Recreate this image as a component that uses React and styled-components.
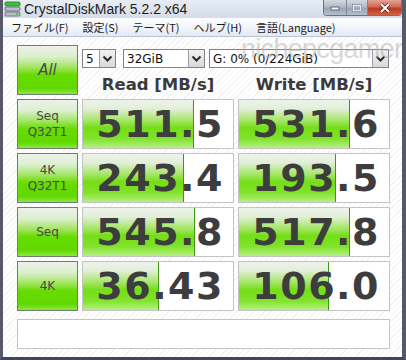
import React from 'react'
import styled, { createGlobalStyle } from 'styled-components'

const GlobalStyle = createGlobalStyle`
  html, body {
    margin: 0;
    padding: 0;
    background: #fff;
  }
  * {
    box-sizing: border-box;
  }
`

const Window = styled.div`
  position: relative;
  width: 406px;
  height: 360px;
  display: flex;
  flex-direction: column;
  background: #d6dfea;
  border-left: 3px solid #58586a;
  border-right: 4px solid #58586a;
  border-bottom: 3px solid #44445a;
  overflow: hidden;
`

const TitleBar = styled.div`
  height: 18px;
  display: flex;
  align-items: flex-start;
  background: linear-gradient(to bottom, #e8edf4, #d3dce8);
`

const TitleText = styled.span`
  margin-left: 2px;
  margin-top: 1px;
  font-family: 'Liberation Sans', Arial, sans-serif;
  font-size: 14px;
  line-height: 16px;
  color: #1e1e1e;
`

const Captions = styled.div`
  margin-left: auto;
  display: flex;
  height: 16px;
  border: 1px solid #6a7384;
  border-top: none;
  border-radius: 0 0 4px 4px;
  overflow: hidden;
`

const CaptionButton = styled.div`
  width: ${(p) => p.$w}px;
  height: 100%;
  display: flex;
  align-items: center;
  justify-content: center;
  background: ${(p) =>
    p.$close
      ? 'linear-gradient(to bottom, #e4a394 0%, #d06a55 45%, #b93a22 55%, #d0613f 100%)'
      : 'linear-gradient(to bottom, #d3d9e2 0%, #b3bcc9 45%, #9aa5b5 55%, #b4bfcd 100%)'};
  border-left: ${(p) => (p.$first ? 'none' : '1px solid #7d8697')};
`

const MenuBar = styled.div`
  height: 19px;
  display: flex;
  align-items: center;
  padding-left: 1px;
  background: linear-gradient(to bottom, #fdfeff 0%, #f2f5fa 50%, #e3e9f3 100%);
  border-bottom: 1px solid #b8c4d6;
`

const MenuItem = styled.span`
  padding: 0 7px;
  font-family: 'Noto Sans CJK JP', 'Liberation Sans', sans-serif;
  font-size: 11px;
  line-height: 18px;
  color: #1a1a1a;
`

const Content = styled.div`
  position: relative;
  flex: 1;
  padding: 8px 0 0 14px;
  background-color: #fff;
  background-image: repeating-linear-gradient(
    135deg,
    #fff 0px,
    #fff 3px,
    #f2f2f2 3px,
    #f2f2f2 4px
  );
`

const Grid = styled.div`
  display: grid;
  grid-template-columns: 61px 152px 152px;
  grid-auto-rows: 50px;
  column-gap: 4px;
  row-gap: 4px;
`

const greenFace = `linear-gradient(
  to bottom,
  #edf1ea 0%,
  #dcefcf 22%,
  #9fe45c 45%,
  #66dc00 60%,
  #62d800 88%,
  #8ae844 100%
)`

const LabelButton = styled.div`
  display: flex;
  flex-direction: column;
  align-items: center;
  justify-content: center;
  background: ${greenFace};
  border: 1px solid #6f7e6c;
  font-family: 'DejaVu Sans', Verdana, sans-serif;
  font-size: ${(p) => (p.$big ? '15px' : '12px')};
  font-style: ${(p) => (p.$big ? 'italic' : 'normal')};
  line-height: 16px;
  color: #4a4a4a;
`

const Controls = styled.div`
  grid-column: 2 / 4;
  display: grid;
  grid-template-columns: 152px 152px;
  grid-template-rows: 19px 1fr;
  column-gap: 4px;
  padding-top: 4px;
`

const SelectRow = styled.div`
  grid-column: 1 / 3;
  display: flex;
`

const Select = styled.div`
  width: ${(p) => p.$w}px;
  margin-right: ${(p) => p.$gap || 0}px;
  height: 19px;
  display: flex;
  align-items: center;
  background: #fff;
  border: 1px solid #7f858f;
  font-family: 'DejaVu Sans', Verdana, sans-serif;
  font-size: 12px;
  color: #111;
`

const SelectValue = styled.span`
  flex: 1;
  padding-left: 3px;
  white-space: nowrap;
  overflow: hidden;
`

const SelectArrow = styled.span`
  width: 16px;
  height: 17px;
  display: flex;
  align-items: center;
  justify-content: center;
  background: linear-gradient(to bottom, #f1f1f1, #d9d9d9);
  border-left: 1px solid #9a9ea6;
`

const Header = styled.div`
  display: flex;
  align-items: center;
  justify-content: center;
  padding-top: 6px;
  font-family: 'DejaVu Sans', Verdana, sans-serif;
  font-weight: bold;
  font-size: 16.5px;
  color: #3a3a3a;
`

const Cell = styled.div`
  position: relative;
  background: #fff;
  border: 1px solid #c4c4c4;
  overflow: hidden;
`

const Bar = styled.div`
  position: absolute;
  left: 0;
  top: 0;
  bottom: 0;
  background: linear-gradient(
    to bottom,
    #eef2ec 0%,
    #e2efd8 18%,
    #a6e668 42%,
    #74de16 58%,
    #80e22a 80%,
    #b6f084 100%
  );
  border-right: 1px solid #3c9a12;
`

const Value = styled.span`
  position: relative;
  display: block;
  text-align: right;
  padding-right: 9px;
  font-family: 'DejaVu Sans', Verdana, sans-serif;
  font-weight: bold;
  font-size: 38px;
  line-height: 48px;
  color: #3d3d3d;
  letter-spacing: 1.5px;
`

const Comment = styled.div`
  width: 373px;
  height: 30px;
  margin-top: 8px;
  background: #fff;
  border: 1px solid #c4c4c4;
`

const Watermark = styled.div`
  position: absolute;
  left: 238px;
  top: -3px;
  font-family: 'Liberation Sans', Arial, sans-serif;
  font-size: 27px;
  letter-spacing: -0.7px;
  color: rgba(175, 175, 175, 0.5);
  pointer-events: none;
  white-space: nowrap;
`

const Chevron = () => (
  <svg width="11" height="8" viewBox="0 0 11 8">
    <polyline points="1.5,1.5 5.5,5.5 9.5,1.5" fill="none" stroke="#2a2a2a" strokeWidth="2" />
  </svg>
)

const AppIcon = () => (
  <svg width="18" height="16" viewBox="0 0 18 16" style={{ marginLeft: 1, marginTop: 1 }}>
    <rect x="1" y="1" width="15" height="4" rx="1" fill="#3cc23c" stroke="#1f7a1f" strokeWidth="0.8" />
    <rect x="1" y="6" width="15" height="4" rx="1" fill="#b9bec6" stroke="#5d636d" strokeWidth="0.8" />
    <rect x="1" y="11" width="15" height="4" rx="1" fill="#b9bec6" stroke="#5d636d" strokeWidth="0.8" />
    <rect x="12" y="12.3" width="2" height="1.4" fill="#3cc23c" />
  </svg>
)

const rows = [
  { label: ['Seq', 'Q32T1'], read: '511.5', readW: 111, write: '531.6', writeW: 111 },
  { label: ['4K', 'Q32T1'], read: '243.4', readW: 101, write: '193.5', writeW: 97 },
  { label: ['Seq'], read: '545.8', readW: 112, write: '517.8', writeW: 111 },
  { label: ['4K'], read: '36.43', readW: 76, write: '106.0', writeW: 90 },
]

const menus = ['ファイル(F)', '設定(S)', 'テーマ(T)', 'ヘルプ(H)', '言語(Language)']

export default function App() {
  return (
    <>
      <GlobalStyle />
      <Window>
        <TitleBar>
          <AppIcon />
          <TitleText>CrystalDiskMark 5.2.2 x64</TitleText>
          <Captions>
            <CaptionButton $w={22} $first>
              <svg width="10" height="6" viewBox="0 0 10 6">
                <rect x="1" y="2" width="8" height="3" fill="#f4f6f9" stroke="#4a5160" strokeWidth="0.8" />
              </svg>
            </CaptionButton>
            <CaptionButton $w={21}>
              <svg width="10" height="8" viewBox="0 0 10 8">
                <rect x="1" y="1" width="8" height="6" fill="none" stroke="#eef1f5" strokeWidth="1.6" />
                <rect x="0.5" y="0.5" width="9" height="7" fill="none" stroke="#59606e" strokeWidth="0.5" />
              </svg>
            </CaptionButton>
            <CaptionButton $w={34} $close>
              <svg width="12" height="10" viewBox="0 0 12 10">
                <path d="M2 1 L10 9 M10 1 L2 9" stroke="#5a1a10" strokeWidth="3.4" />
                <path d="M2 1 L10 9 M10 1 L2 9" stroke="#ffffff" strokeWidth="2" />
              </svg>
            </CaptionButton>
          </Captions>
        </TitleBar>
        <MenuBar>
          {menus.map((m) => (
            <MenuItem key={m}>{m}</MenuItem>
          ))}
        </MenuBar>
        <Content>
          <Watermark>nichepcgamer</Watermark>
          <Grid>
            <LabelButton $big>All</LabelButton>
            <Controls>
              <SelectRow>
                <Select $w={34} $gap={7}>
                  <SelectValue>5</SelectValue>
                  <SelectArrow>
                    <Chevron />
                  </SelectArrow>
                </Select>
                <Select $w={82} $gap={4}>
                  <SelectValue>32GiB</SelectValue>
                  <SelectArrow>
                    <Chevron />
                  </SelectArrow>
                </Select>
                <Select $w={180}>
                  <SelectValue>G: 0% (0/224GiB)</SelectValue>
                  <SelectArrow>
                    <Chevron />
                  </SelectArrow>
                </Select>
              </SelectRow>
              <Header>Read [MB/s]</Header>
              <Header>Write [MB/s]</Header>
            </Controls>
            {rows.map((r) => (
              <React.Fragment key={r.read}>
                <LabelButton>
                  {r.label.map((l) => (
                    <span key={l}>{l}</span>
                  ))}
                </LabelButton>
                <Cell>
                  <Bar style={{ width: r.readW }} />
                  <Value>{r.read}</Value>
                </Cell>
                <Cell>
                  <Bar style={{ width: r.writeW }} />
                  <Value>{r.write}</Value>
                </Cell>
              </React.Fragment>
            ))}
          </Grid>
          <Comment />
        </Content>
      </Window>
    </>
  )
}
